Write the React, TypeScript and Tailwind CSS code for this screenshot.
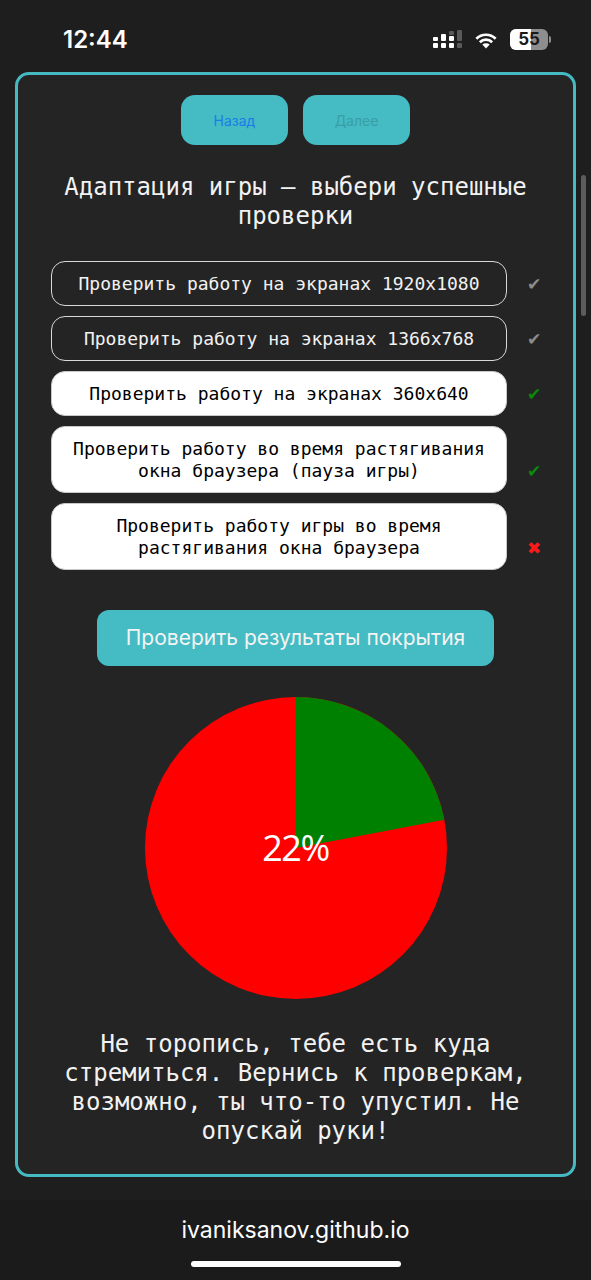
const mono = { fontFamily: '"DejaVu Sans Mono", "Liberation Mono", monospace' };

const rows = [
  { text: "Проверить работу на экранах 1920x1080", filled: false, mark: "✔", markClass: "text-[#8c8c8c]" },
  { text: "Проверить работу на экранах 1366x768", filled: false, mark: "✔", markClass: "text-[#8c8c8c]" },
  { text: "Проверить работу на экранах 360x640", filled: true, mark: "✔", markClass: "text-[#0a8a0a]" },
  { text: "Проверить работу во время растягивания окна браузера (пауза игры)", filled: true, mark: "✔", markClass: "text-[#0a8a0a]" },
  { text: "Проверить работу игры во время растягивания окна браузера", filled: true, mark: "✖", markClass: "text-[#ff1a1a]" },
];

function StatusBar() {
  return (
    <div className="flex h-[72px] items-start justify-between pl-[63px] pr-[40px] pt-[24px]">
      <span className="text-[24px] font-semibold leading-[32px] text-white" style={{ fontFamily: "Inter, sans-serif" }}>12:44</span>
      <div className="flex items-center gap-[12px] pt-[5px]">
        <svg width="29" height="19" viewBox="0 0 29 19">
          <rect x="0" y="13" width="5" height="5" rx="1" fill="#fff" />
          <rect x="8" y="13" width="5" height="5" rx="1" fill="#fff" />
          <rect x="16" y="13" width="5" height="5" rx="1" fill="#fff" />
          <rect x="24" y="13" width="5" height="5" rx="1" fill="#5a5a5a" />
          <rect x="0" y="7" width="5" height="4" rx="1" fill="#fff" />
          <rect x="8" y="4" width="5" height="7" rx="1" fill="#fff" />
          <rect x="16" y="6" width="5" height="5" rx="1" fill="#fff" />
          <rect x="16" y="1" width="5" height="4" rx="1" fill="#5a5a5a" />
          <rect x="24" y="0" width="5" height="11" rx="1" fill="#5a5a5a" />
        </svg>
        <svg width="24" height="18" viewBox="0 0 24 18">
          <path d="M12 17.5 L8.3 13.6 A5.4 5.4 0 0 1 15.7 13.6 Z" fill="#fff" />
          <path d="M4.9 10.3 A10 10 0 0 1 19.1 10.3 L17.2 12.2 A7.3 7.3 0 0 0 6.8 12.2 Z" fill="#fff" />
          <path d="M1.4 6.8 A15 15 0 0 1 22.6 6.8 L20.7 8.7 A12.3 12.3 0 0 0 3.3 8.7 Z" fill="#fff" />
        </svg>
        <div className="flex items-center">
          <div className="relative h-[21px] w-[38px] overflow-hidden rounded-[6px] bg-[#8e8e8e]">
            <div className="h-full w-[21px] bg-white" />
            <span className="absolute inset-0 flex items-center justify-center text-[17px] font-bold text-[#1a1a1a]" style={{ fontFamily: "Inter, sans-serif" }}>55</span>
          </div>
          <div className="ml-[1px] h-[7px] w-[2px] rounded-r-full bg-[#8e8e8e]" />
        </div>
      </div>
    </div>
  );
}

function Pie() {
  return (
    <div className="relative mx-auto mt-[31px] h-[302px] w-[302px]">
      <svg width="302" height="302" viewBox="0 0 302 302">
        <circle cx="151" cy="151" r="151" fill="#ff0000" />
        <path d="M151 151 L151 0 A151 151 0 0 1 299.33 122.71 Z" fill="#008000" />
      </svg>
      <div className="absolute inset-0 flex items-center justify-center">
        <span className="text-[36px] leading-none tracking-[-0.04em] text-white" style={{ fontFamily: '"Open Sans", sans-serif' }}>22%</span>
      </div>
    </div>
  );
}

export default function App() {
  return (
    <div className="relative min-h-[1280px] w-[591px] bg-[#1e1e1e]">
      <StatusBar />
      <div className="ml-[15px] w-[561px] rounded-[14px] border-[3px] border-[#46bac2] bg-[#242424] pb-[28px] pt-[20px]">
        <div className="flex justify-center gap-[15px]" style={{ fontFamily: "Inter, sans-serif" }}>
          <button className="h-[50px] w-[107px] rounded-[14px] bg-[#45bbc3] text-[14px] text-[#1a7de6]">Назад</button>
          <button className="h-[50px] w-[107px] rounded-[14px] bg-[#45bbc3] text-[14px] text-[#3a9ea6]">Далее</button>
        </div>
        <h1 className="mt-[28px] px-[20px] text-center text-[24px] font-normal leading-[29px] text-[#f2f2f2]" style={mono}>
          Адаптация игры — выбери успешные проверки
        </h1>
        <div className="mt-[30px] flex flex-col gap-[10px]" style={mono}>
          {rows.map((r) => (
            <div key={r.text} className="flex items-end pl-[33px]">
              <div className={r.filled
                ? "w-[456px] rounded-[14px] border border-[#c8c8c8] bg-white px-[12px] py-[10.5px] text-center text-[18px] leading-[22px] text-black"
                : "w-[456px] rounded-[14px] border border-[#d9d9d9] bg-[#242424] px-[12px] py-[10.5px] text-center text-[18px] leading-[22px] text-[#f2f2f2]"}>
                {r.text}
              </div>
              <span className={`mb-[11px] w-[54px] text-center text-[17px] leading-[22px] ${r.markClass}`} style={{ fontFamily: '"DejaVu Sans", sans-serif' }}>{r.mark}</span>
            </div>
          ))}
        </div>
        <button className="mx-auto mt-[40px] flex h-[56px] w-[397px] items-center justify-center rounded-[12px] bg-[#45bbc3] text-[21px] text-[#f4f4f4]" style={{ fontFamily: "Inter, sans-serif" }}>
          Проверить результаты покрытия
        </button>
        <Pie />
        <p className="mt-[31px] px-[20px] text-center text-[24px] leading-[29px] text-[#f2f2f2]" style={mono}>
          Не торопись, тебе есть куда стремиться. Вернись к проверкам, возможно, ты что-то упустил. Не опускай руки!
        </p>
      </div>
      <div className="mt-[23px] flex h-[80px] flex-col items-center bg-[#1b1b1b] pt-[16px]">
        <span className="text-[23px] leading-[28px] text-white" style={{ fontFamily: "Inter, sans-serif" }}>ivaniksanov.github.io</span>
        <div className="mt-[17px] h-[6px] w-[210px] rounded-full bg-white" />
      </div>
      <div className="absolute left-[581px] top-[175px] h-[141px] w-[5px] rounded-full bg-[#5c5c5c]" />
    </div>
  );
}
